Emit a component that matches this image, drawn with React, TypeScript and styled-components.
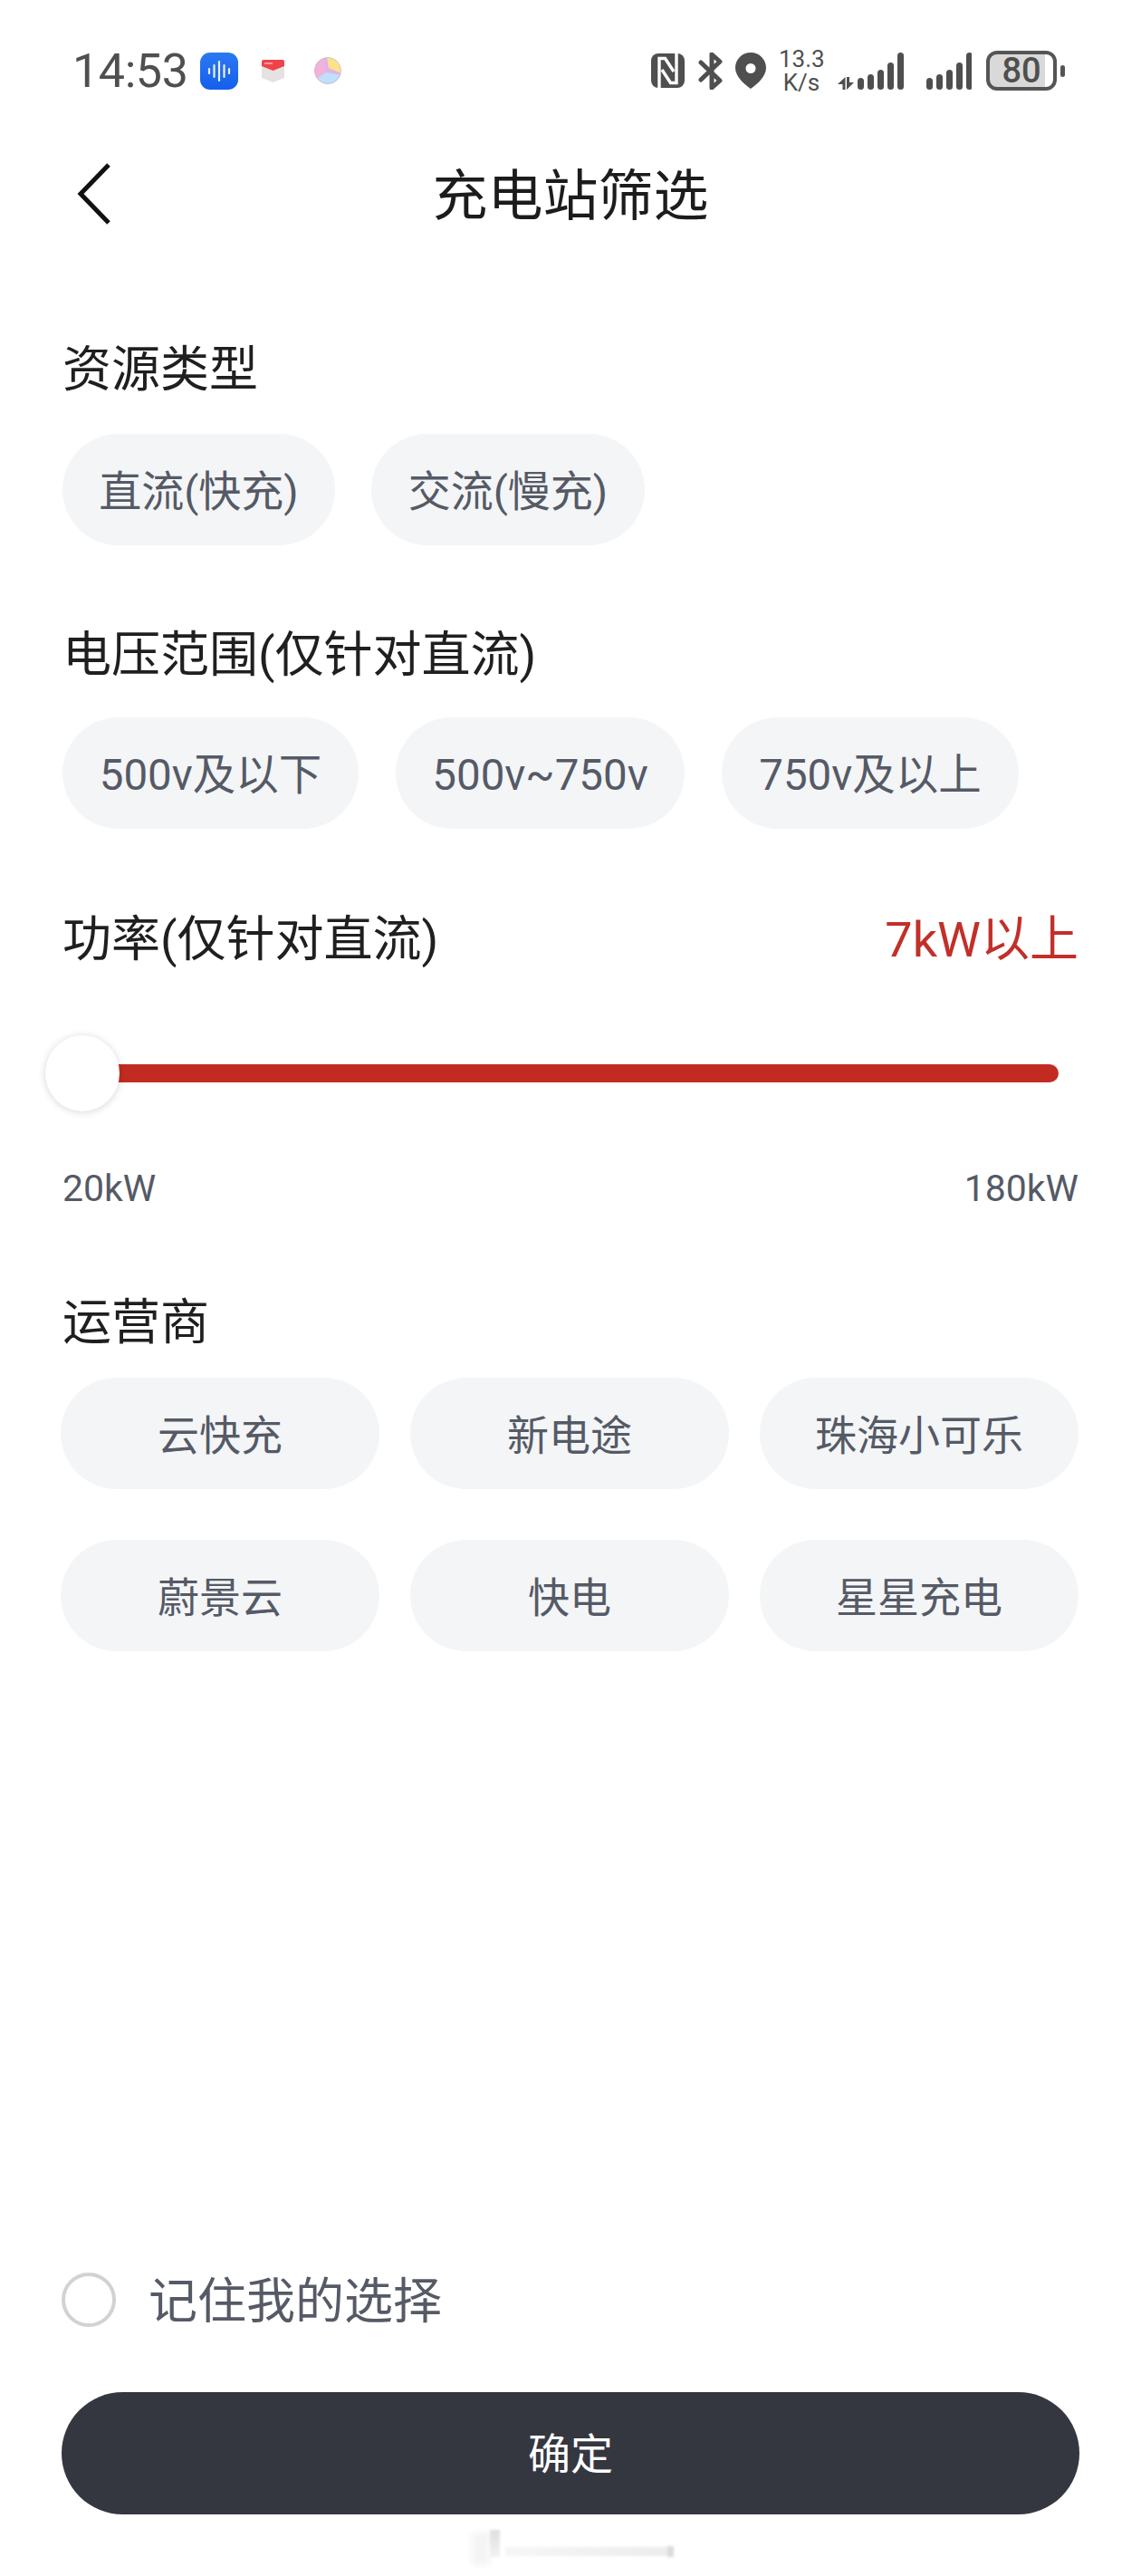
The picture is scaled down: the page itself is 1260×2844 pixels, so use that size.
import React from "react";
import styled, { createGlobalStyle } from "styled-components";

const Global = createGlobalStyle`
  html, body { margin: 0; padding: 0; background: #fff; }
  * { box-sizing: border-box; }
`;

const FONT = `Roboto, "Noto Sans CJK SC", sans-serif`;

const Page = styled.div`
  width: 1260px;
  height: 2844px;
  background: #fff;
  display: flex;
  flex-direction: column;
  font-family: ${FONT};
  overflow: hidden;
`;

const StatusBar = styled.div`
  height: 156px;
  padding: 0 84px 0 80px;
  display: flex;
  align-items: center;
  justify-content: space-between;
  color: #4f4f4f;
`;

const StatusLeft = styled.div`
  display: flex;
  align-items: center;
`;

const Clock = styled.span`
  font-size: 52px;
  line-height: 60px;
  padding-top: 2px;
  width: 125px;
  letter-spacing: -0.4px;
  white-space: nowrap;
  margin-right: 16px;
`;

const StatusRight = styled.div`
  display: flex;
  align-items: center;
`;

const Speed = styled.div`
  width: 50px;
  margin: 0 15px 0 14px;
  font-size: 26px;
  line-height: 26px;
  text-align: center;
  white-space: nowrap;
`;

const Battery = styled.div<{ $level: number }>`
  width: 78px;
  height: 44px;
  border: 4px solid #555;
  border-radius: 12px;
  margin-left: 16px;
  display: flex;
  align-items: center;
  justify-content: center;
  font-size: 38px;
  font-weight: 500;
  line-height: 1;
  background: linear-gradient(
    to right,
    #d9d9d9 ${(p) => p.$level}%,
    #fff ${(p) => p.$level}%
  );
`;

const BatteryNub = styled.div`
  width: 5px;
  height: 13px;
  margin-left: 4px;
  border-radius: 3px;
  background: #555;
`;

const NavBar = styled.div`
  height: 116px;
  display: grid;
  grid-template-columns: 1fr auto 1fr;
  align-items: center;
  padding-left: 85px;
`;

const Title = styled.h1`
  margin: 0 0 0 -85px;
  padding-top: 5px;
  font-size: 61px;
  line-height: 80px;
  font-weight: 400;
  color: #1c1c1c;
`;

const Content = styled.div`
  padding: 94px 69px 0;
  display: flex;
  flex-direction: column;
`;

const LabelRow = styled.div<{ $top?: number }>`
  height: 80px;
  margin-top: ${(p) => p.$top ?? 0}px;
  display: flex;
  align-items: center;
  justify-content: space-between;
`;

const Label = styled.span`
  font-size: 54px;
  line-height: 80px;
  padding-top: 6px;
  color: #1f1f1f;
  white-space: nowrap;
`;

const PowerValue = styled(Label)`
  color: #c1302a;
`;

const ChipRow = styled.div<{ $top: number; $gap: number }>`
  display: flex;
  gap: ${(p) => p.$gap}px;
  margin-top: ${(p) => p.$top}px;
`;

const Chip = styled.div<{ $width?: number; $size?: number }>`
  height: 123px;
  width: ${(p) => (p.$width ? `${p.$width}px` : "auto")};
  padding-top: 4px;
  border-radius: 62px;
  background: #f4f5f7;
  color: #555a66;
  font-size: ${(p) => p.$size ?? 46}px;
  line-height: 60px;
  display: flex;
  align-items: center;
  justify-content: center;
  white-space: nowrap;
`;

const ChipGrid = styled.div`
  display: grid;
  grid-template-columns: repeat(3, 352px);
  column-gap: 34px;
  row-gap: 56px;
  margin: 23px 0 0 -2px;
`;

const Slider = styled.div`
  height: 84px;
  margin: 68px 22px 0 -19px;
  display: flex;
  align-items: center;
`;

const Thumb = styled.div`
  width: 82px;
  height: 84px;
  flex: none;
  border-radius: 50%;
  background: #fff;
  box-shadow: 0 1px 9px rgba(0, 0, 0, 0.16);
  z-index: 1;
`;

const Track = styled.div`
  flex: 1;
  height: 20px;
  background: #c22b22;
  border-radius: 0 10px 10px 0;
  margin-left: -2px;
`;

const RangeRow = styled.div`
  height: 60px;
  margin-top: 54px;
  padding-top: 2px;
  display: flex;
  align-items: center;
  justify-content: space-between;
  font-size: 41px;
  line-height: 58px;
  color: #555a66;
`;

const Footer = styled.div`
  margin-top: auto;
  padding: 0 68px;
  display: flex;
  flex-direction: column;
`;

const RememberRow = styled.div`
  display: flex;
  align-items: center;
  height: 60px;
`;

const Radio = styled.div`
  width: 60px;
  height: 60px;
  border-radius: 50%;
  border: 4px solid #d2d2d2;
  margin-right: 36px;
`;

const RememberText = styled.span`
  font-size: 54px;
  line-height: 60px;
  padding-top: 5px;
  color: #555a66;
`;

const Confirm = styled.button`
  display: block;
  height: 135px;
  width: 100%;
  margin-top: 72px;
  padding: 3px 0 0;
  border: 0;
  border-radius: 68px;
  background: #353740;
  color: #fff;
  font-family: ${FONT};
  font-size: 47px;
  line-height: 60px;
`;

const GestureHint = styled.svg`
  display: block;
  width: 240px;
  height: 54px;
  margin: 14px 0 0 445px;
`;

const BlueIcon = () => (
  <svg width="42" height="41" viewBox="0 0 42 41" style={{ display: "block" }}>
    <defs>
      <linearGradient id="blue" x1="0" y1="0" x2="0" y2="1">
        <stop offset="0" stopColor="#2b78f2" />
        <stop offset="1" stopColor="#155fec" />
      </linearGradient>
    </defs>
    <rect width="42" height="41" rx="11" fill="url(#blue)" />
    <g stroke="#eaf2ff" strokeWidth="2.2" strokeLinecap="round">
      <path d="M10 18v5M15.500 14v13M21 10v21M26.500 14v13M32 18v5" />
    </g>
  </svg>
);

const BoxIcon = () => (
  <svg width="27" height="26" viewBox="0 0 27 26" style={{ display: "block", margin: "0 32px 0 25px" }}>
    <path d="M1 6V21L13.500 26 26 21V6z" fill="#e6e2e2" />
    <path d="M1 3q0-2 2-2h21q2 0 2 2v5l-12.500 5L1 8z" fill="#ee4447" />
    <path d="M4 5h9" stroke="#f9b5b5" strokeWidth="1.5" />
  </svg>
);

const PastelIcon = () => (
  <svg width="30" height="30" viewBox="0 0 30 30" style={{ display: "block" }}>
    <defs>
      <clipPath id="egg">
        <circle cx="15" cy="15" r="14.5" />
      </clipPath>
    </defs>
    <g clipPath="url(#egg)">
      <rect width="30" height="30" fill="#fde28a" />
      <path d="M0 0h14l2 12 14 6v12H0z" fill="#dfb4ea" />
      <path d="M0 2h10l3 16-13 8z" fill="#f3b2dc" />
      <path d="M0 26l13-9 17 3v10H0z" fill="#bfe0fb" />
    </g>
    <circle cx="15" cy="15" r="14.5" fill="none" stroke="#c9b7c6" strokeWidth="0.8" />
  </svg>
);

const NfcIcon = () => (
  <svg width="37" height="38" viewBox="0 0 37 38" style={{ display: "block" }}>
    <rect width="37" height="38" rx="8" fill="#4f4f4f" />
    <path
      d="M9 38V5.500H15.500L25 20M28 0V32.500H21.500L12 18"
      fill="none"
      stroke="#fff"
      strokeWidth="3.4"
      strokeLinejoin="miter"
    />
  </svg>
);

const BluetoothIcon = () => (
  <svg width="27" height="41" viewBox="0 0 27 41" style={{ display: "block", marginLeft: 15 }}>
    <path
      d="M3 11l21 20-9 8V2l9 8-21 20"
      fill="none"
      stroke="#4f4f4f"
      strokeWidth="5"
      strokeLinecap="round"
      strokeLinejoin="round"
    />
  </svg>
);

const PinIcon = () => (
  <svg width="34" height="40" viewBox="0 0 34 40" style={{ display: "block", marginLeft: 14 }}>
    <path
      fillRule="evenodd"
      d="M17 0C7.500 0 0 7.400 0 17c0 9 9 17.500 17 23 8-5.500 17-14 17-23C34 7.400 26.500 0 17 0zm0 12a5.500 5.500 0 1 1 0 11 5.500 5.500 0 0 1 0-11z"
      fill="#4f4f4f"
    />
  </svg>
);

const SIGNAL = [13, 17, 22, 30, 41];

const Bars = ({ x }: { x: number }) => (
  <>
    {SIGNAL.map((h, i) => (
      <rect key={i} x={x + i * 11} y={41 - h} width="7" height={h} rx="3.5" fill="#4f4f4f" />
    ))}
  </>
);

const SignalData = () => (
  <svg width="73" height="41" viewBox="0 0 73 41" style={{ display: "block" }}>
    <path d="M8.500 27V41H5.500V35H0zM10 27h3v6h5L10 41z" fill="#4f4f4f" />
    <Bars x={22} />
  </svg>
);

const SignalPlain = () => (
  <svg width="51" height="41" viewBox="0 0 51 41" style={{ display: "block", marginLeft: 24 }}>
    <Bars x={1} />
  </svg>
);

const BackIcon = () => (
  <svg width="38" height="68" viewBox="0 0 38 68" style={{ display: "block" }}>
    <path d="M35 2L4 34l31 32" fill="none" stroke="#111" strokeWidth="5" />
  </svg>
);

const App = () => (
  <Page>
    <Global />
    <StatusBar>
      <StatusLeft>
        <Clock>14:53</Clock>
        <BlueIcon />
        <BoxIcon />
        <PastelIcon />
      </StatusLeft>
      <StatusRight>
        <NfcIcon />
        <BluetoothIcon />
        <PinIcon />
        <Speed>
          13.3
          <br />
          K/s
        </Speed>
        <SignalData />
        <SignalPlain />
        <Battery $level={87}>80</Battery>
        <BatteryNub />
      </StatusRight>
    </StatusBar>
    <NavBar>
      <BackIcon />
      <Title>充电站筛选</Title>
    </NavBar>
    <Content>
      <LabelRow>
        <Label>资源类型</Label>
      </LabelRow>
      <ChipRow $top={33} $gap={40}>
        <Chip $width={301} $size={47}>直流(快充)</Chip>
        <Chip $width={302} $size={47}>交流(慢充)</Chip>
      </ChipRow>
      <LabelRow $top={79}>
        <Label>电压范围(仅针对直流)</Label>
      </LabelRow>
      <ChipRow $top={31} $gap={41}>
        <Chip $width={327} $size={47.5}>500v及以下</Chip>
        <Chip $width={319} $size={47.5}>500v~750v</Chip>
        <Chip $width={328} $size={47.5}>750v及以上</Chip>
      </ChipRow>
      <LabelRow $top={80}>
        <Label>功率(仅针对直流)</Label>
        <PowerValue>7kW以上</PowerValue>
      </LabelRow>
      <Slider>
        <Thumb />
        <Track />
      </Slider>
      <RangeRow>
        <span>20kW</span>
        <span>180kW</span>
      </RangeRow>
      <LabelRow $top={77}>
        <Label>运营商</Label>
      </LabelRow>
      <ChipGrid>
        {["云快充", "新电途", "珠海小可乐", "蔚景云", "快电", "星星充电"].map((name) => (
          <Chip key={name}>{name}</Chip>
        ))}
      </ChipGrid>
    </Content>
    <Footer>
      <RememberRow>
        <Radio />
        <RememberText>记住我的选择</RememberText>
      </RememberRow>
      <Confirm>确定</Confirm>
      <GestureHint viewBox="0 0 240 54">
        <defs>
          <filter id="smudgeSoft" x="-30%" y="-50%" width="160%" height="200%">
            <feGaussianBlur stdDeviation="3" />
          </filter>
          <filter id="smudge" x="-30%" y="-100%" width="160%" height="300%">
            <feGaussianBlur stdDeviation="1.500" />
          </filter>
          <linearGradient id="fade" x1="0" y1="0" x2="1" y2="0">
            <stop offset="0" stopColor="#f6f6f6" />
            <stop offset="1" stopColor="#ececec" />
          </linearGradient>
          <linearGradient id="fadeDown" x1="0" y1="0" x2="0" y2="1">
            <stop offset="0" stopColor="#dedede" />
            <stop offset="1" stopColor="#f2f2f2" />
          </linearGradient>
        </defs>
        <rect x="8" y="6" width="20" height="36" fill="#f4f4f4" filter="url(#smudgeSoft)" />
        <g filter="url(#smudge)">
          <rect x="28" y="3" width="11" height="30" fill="url(#fadeDown)" />
          <rect x="45" y="22" width="180" height="10" fill="url(#fade)" />
          <rect x="224" y="21" width="7" height="12" fill="#dcdcdc" />
        </g>
      </GestureHint>
    </Footer>
  </Page>
);

export default App;
